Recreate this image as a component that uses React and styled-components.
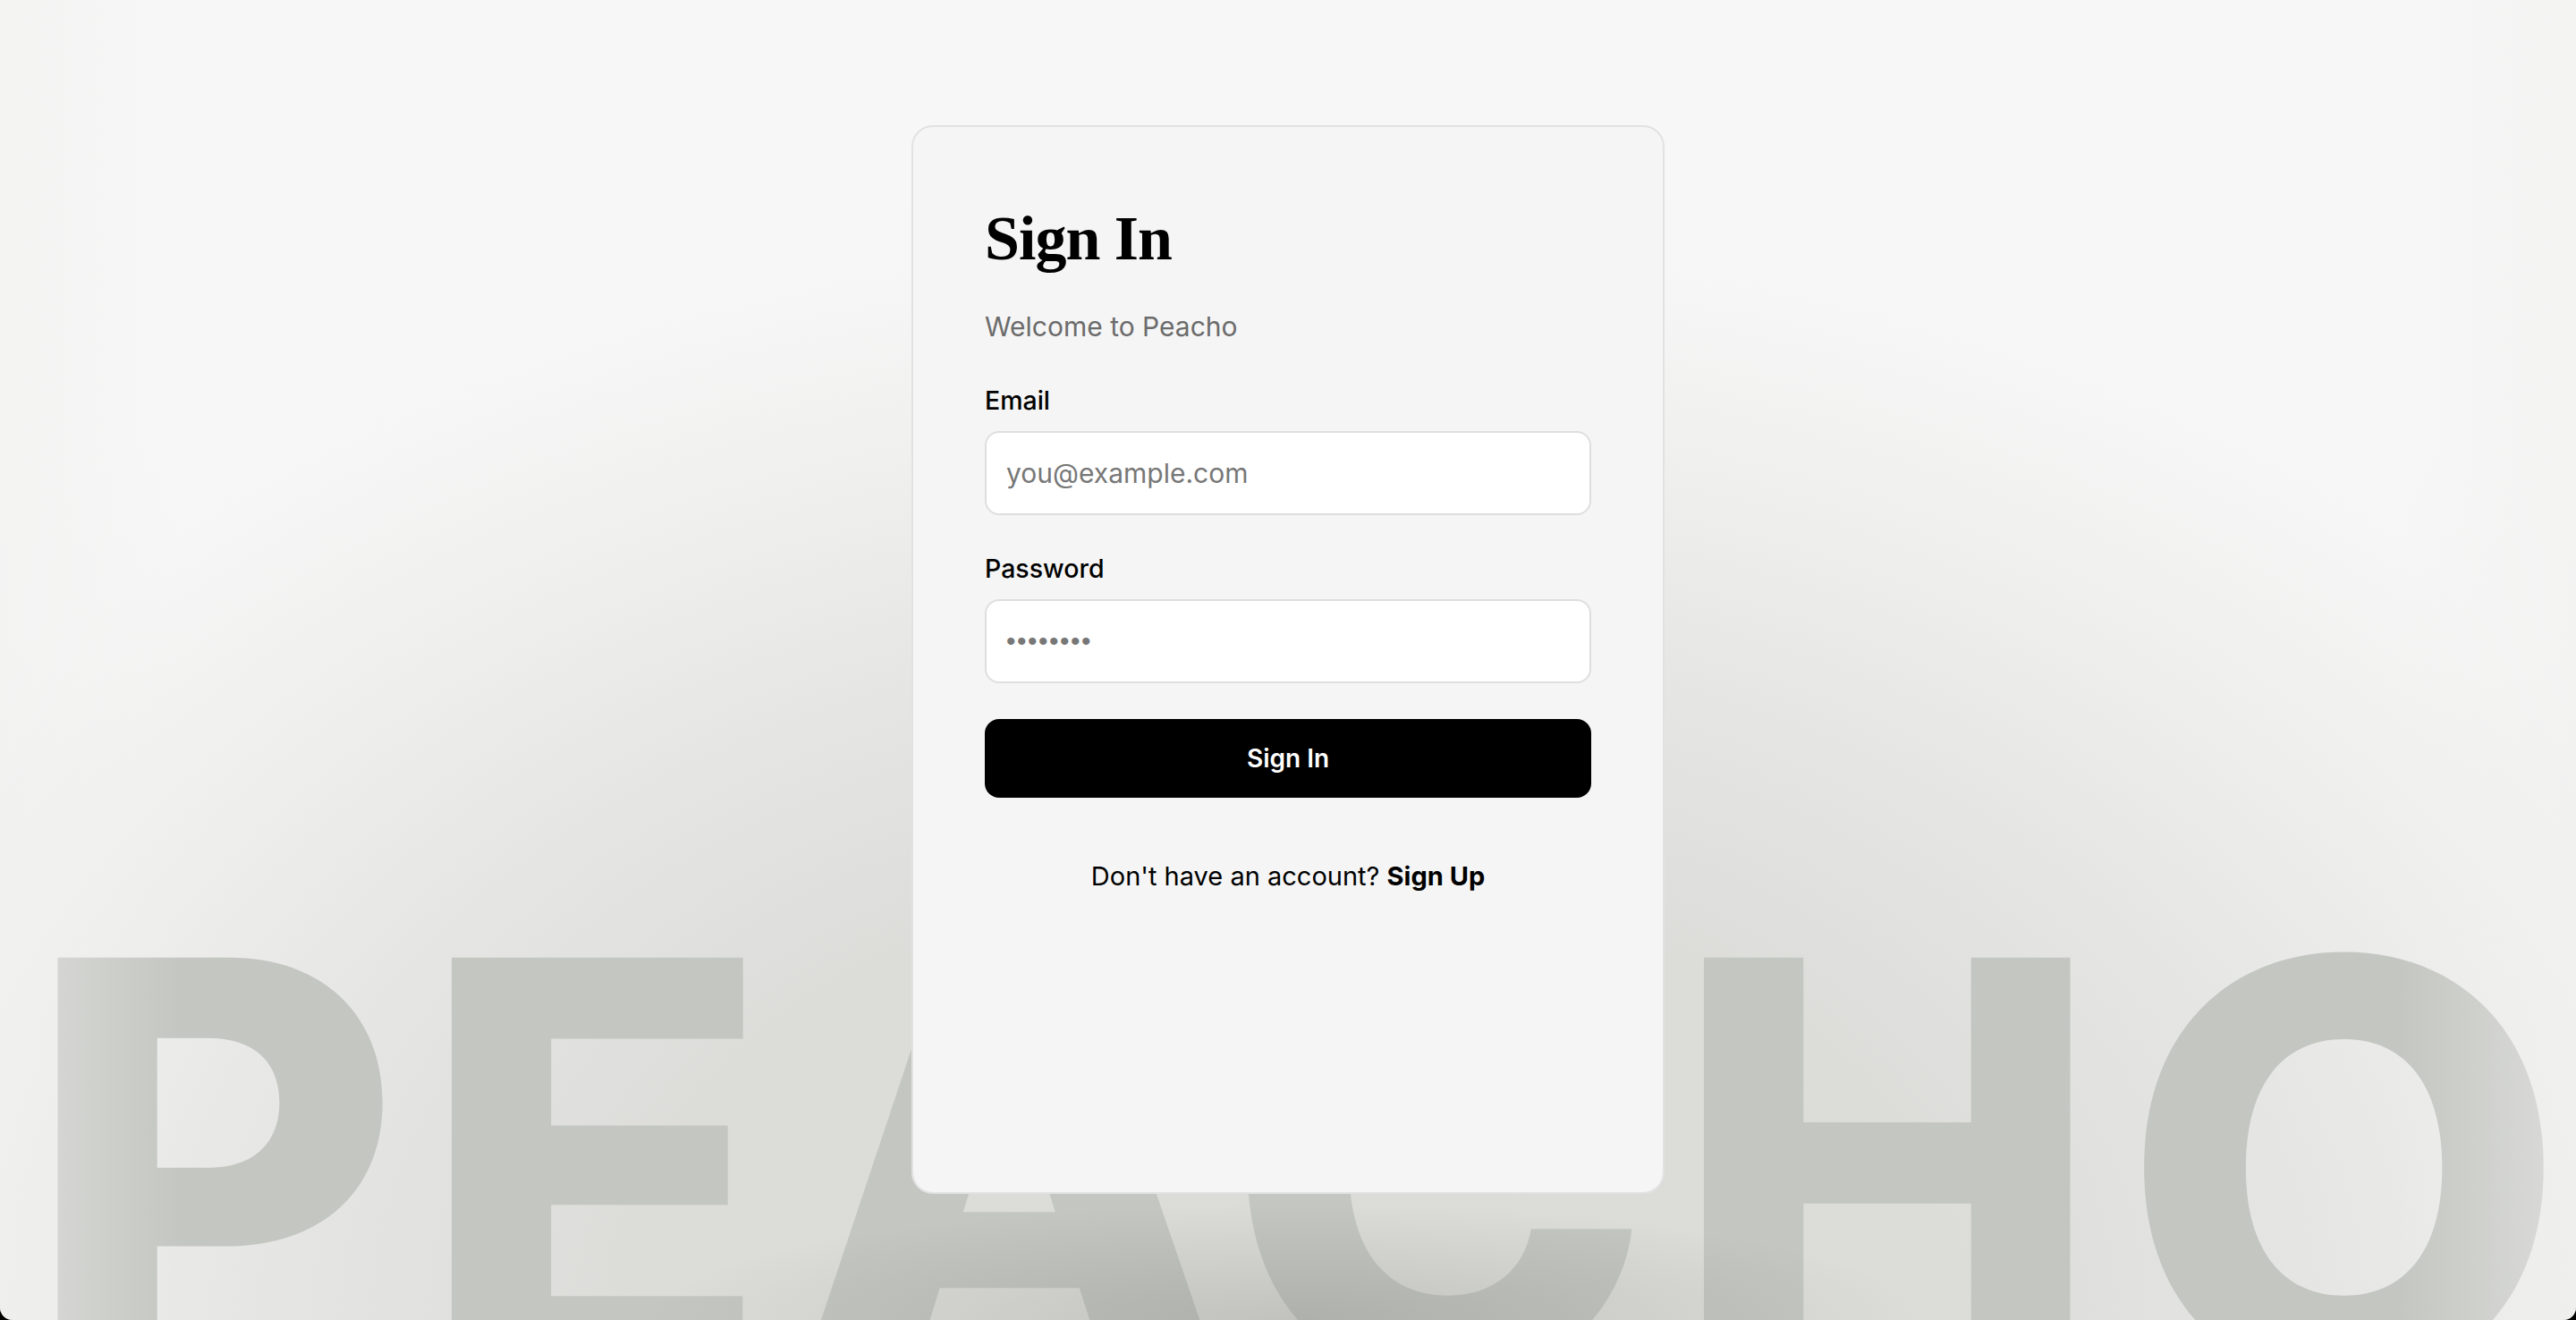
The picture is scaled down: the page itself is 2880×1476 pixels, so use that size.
import React from "react"
import styled, { createGlobalStyle } from "styled-components"

const GlobalStyle = createGlobalStyle`
  html, body {
    margin: 0;
    padding: 0;
    background: #000;
  }
  * {
    box-sizing: border-box;
  }
`

const sans = `"Inter", "Noto Sans", sans-serif`

const Page = styled.main`
  position: relative;
  min-height: 1476px;
  overflow: hidden;
  border-radius: 0 0 14px 14px;
  font-family: ${sans};
  background: radial-gradient(
    ellipse 1950px 1300px at 50% 100%,
    #dbdcd8 0%,
    #dcddd9 38%,
    #e5e6e3 58%,
    #efefee 76%,
    #f6f6f6 92%,
    #f7f7f7 100%
  );
`

// big faded brand word sitting behind the card
const Watermark = styled.div`
  position: absolute;
  left: 0;
  right: 0;
  top: 983px;
  padding-left: 28px;
  text-align: center;
  font-family: ${sans};
  font-weight: 800;
  font-size: 645px;
  line-height: 1;
  letter-spacing: 20px;
  color: #c4c6c1;
  white-space: nowrap;
  user-select: none;
`

const Shade = styled.div`
  position: absolute;
  inset: 0;
  pointer-events: none;
  background:
    radial-gradient(ellipse 720px 130px at 50% 100%, rgba(60, 62, 58, 0.16), rgba(60, 62, 58, 0) 100%),
    linear-gradient(90deg, rgba(240, 240, 239, 0.55) 0%, rgba(240, 240, 239, 0) 7%, rgba(240, 240, 239, 0) 93%, rgba(240, 240, 239, 0.55) 100%);
`

const Card = styled.section`
  position: relative;
  z-index: 2;
  display: flex;
  flex-direction: column;
  width: 842px;
  height: 1195px;
  margin: 140px auto 0;
  padding: 85px 80px 80px;
  background: #f5f5f5;
  border: 2px solid #e2e2e2;
  border-radius: 24px;
`

const Title = styled.h1`
  margin: 0;
  font-family: "Liberation Serif", "DejaVu Serif", serif;
  font-weight: 700;
  font-size: 70px;
  line-height: 80px;
  letter-spacing: -1px;
  color: #000;
`

const Subtitle = styled.p`
  margin: 36px 0 0;
  font-size: 30px;
  line-height: 45px;
  color: #6b6b6b;
`

const Field = styled.label`
  display: flex;
  flex-direction: column;
  gap: 14px;
  margin-top: 40px;
`

const LabelText = styled.span`
  font-size: 28.5px;
  line-height: 40px;
  font-weight: 500;
  color: #000;
`

const Input = styled.input`
  width: 100%;
  height: 94px;
  padding: 0 22px;
  background: #fff;
  border: 2px solid #dedede;
  border-radius: 16px;
  outline: none;
  font-family: ${props => props.$dots ? `"Liberation Sans", sans-serif` : sans};
  font-size: 30px;
  letter-spacing: ${props => props.$dots ? "1.5px" : "0"};
  color: #222;

  &::placeholder {
    color: #777;
  }
`

const Button = styled.button`
  margin-top: 40px;
  width: 100%;
  height: 88px;
  border: none;
  border-radius: 16px;
  background: #000;
  color: #fff;
  font-family: ${sans};
  font-size: 28px;
  font-weight: 600;
  cursor: pointer;
`

const Footer = styled.p`
  margin: 68px 0 0;
  text-align: center;
  font-size: 29px;
  line-height: 40px;
  color: #000;

  a {
    color: #000;
    font-weight: 700;
    text-decoration: none;
  }
`

const App = () => {
  return (
    <>
      <GlobalStyle />
      <Page>
        <Watermark aria-hidden="true">PEACHO</Watermark>
        <Shade />
        <Card>
          <Title>Sign In</Title>
          <Subtitle>Welcome to Peacho</Subtitle>
          <Field>
            <LabelText>Email</LabelText>
            <Input type="email" placeholder="you@example.com" />
          </Field>
          <Field>
            <LabelText>Password</LabelText>
            <Input $dots type="password" placeholder="••••••••" />
          </Field>
          <Button type="button">Sign In</Button>
          <Footer>
            Don't have an account? <a href="#">Sign Up</a>
          </Footer>
        </Card>
      </Page>
    </>
  )
}

export default App
